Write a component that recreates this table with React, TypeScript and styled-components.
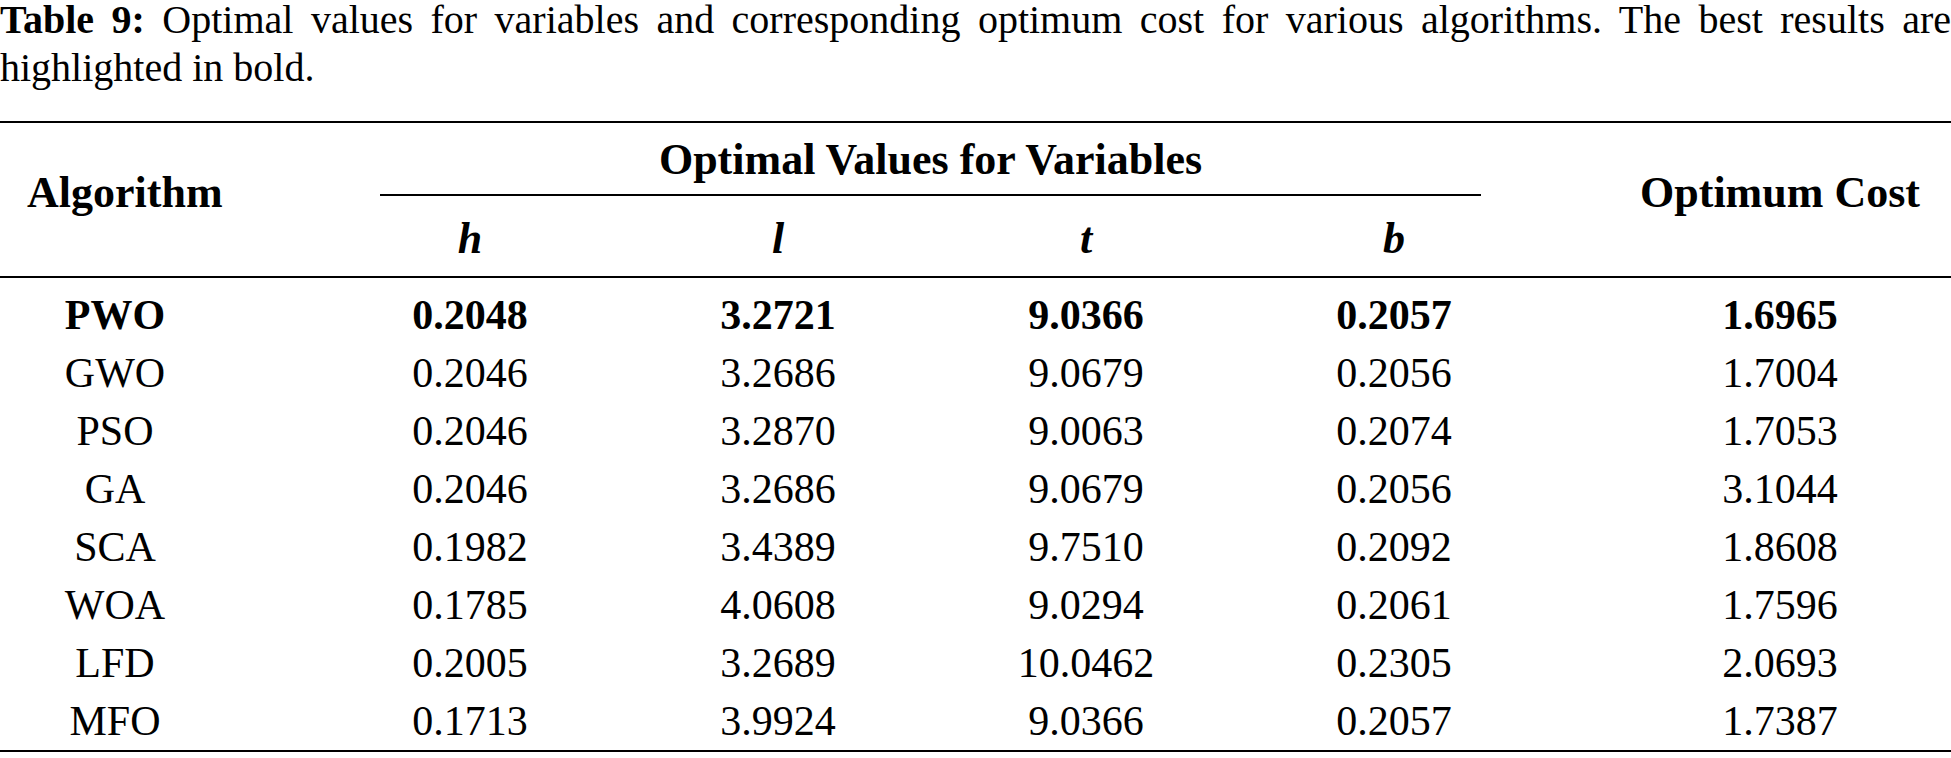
import styled, { createGlobalStyle } from 'styled-components'

const VARS = ['h', 'l', 't', 'b']

const ROWS = [
  { name: 'PWO', values: ['0.2048', '3.2721', '9.0366', '0.2057'], cost: '1.6965', best: true },
  { name: 'GWO', values: ['0.2046', '3.2686', '9.0679', '0.2056'], cost: '1.7004' },
  { name: 'PSO', values: ['0.2046', '3.2870', '9.0063', '0.2074'], cost: '1.7053' },
  { name: 'GA', values: ['0.2046', '3.2686', '9.0679', '0.2056'], cost: '3.1044' },
  { name: 'SCA', values: ['0.1982', '3.4389', '9.7510', '0.2092'], cost: '1.8608' },
  { name: 'WOA', values: ['0.1785', '4.0608', '9.0294', '0.2061'], cost: '1.7596' },
  { name: 'LFD', values: ['0.2005', '3.2689', '10.0462', '0.2305'], cost: '2.0693' },
  { name: 'MFO', values: ['0.1713', '3.9924', '9.0366', '0.2057'], cost: '1.7387' },
]

export default function App() {
  return (
    <>
      <GlobalStyle />
      <Page>
        <Caption>
          <b>Table 9:</b> Optimal values for variables and corresponding optimum cost for various
          algorithms. The best results are highlighted in bold.
        </Caption>
        <Table>
          <Head>
            <AlgoHead>Algorithm</AlgoHead>
            <GroupHead>Optimal Values for Variables</GroupHead>
            {VARS.map((v, idx) => (
              <SubHead key={v} col={idx + 2}>{v}</SubHead>
            ))}
            <CostHead>Optimum Cost</CostHead>
          </Head>
          <Body>
            {ROWS.map(row => (
              <Row key={row.name} best={row.best}>
                <NameCell>{row.name}</NameCell>
                {row.values.map((val, idx) => (
                  <Cell key={idx}>{val}</Cell>
                ))}
                <CostCell>{row.cost}</CostCell>
              </Row>
            ))}
          </Body>
        </Table>
      </Page>
    </>
  )
}

const GlobalStyle = createGlobalStyle`
  html, body {
    margin: 0;
    padding: 0;
    background: #fff;
  }
  body {
    font-family: "Liberation Serif", "Times New Roman", serif;
    color: #000;
    overflow: hidden;
  }
`

// name col, four variable cols, cost col
const COLUMNS = '316px repeat(4, 308px) 1fr'

const Page = styled.div`
  width: 1951px;
`

const Caption = styled.p`
  margin: -4px 0 0;
  font-size: 40px;
  line-height: 48px;
  text-align: justify;

  b {
    font-weight: 700;
  }
`

const Table = styled.div`
  margin-top: 29px;
  border-top: 2px solid #000;
  border-bottom: 2px solid #000;
`

const Head = styled.div`
  display: grid;
  grid-template-columns: ${COLUMNS};
  grid-template-rows: 73px 80px;
  border-bottom: 2px solid #000;
  font-size: 44px;
  font-weight: 700;
`

const AlgoHead = styled.div`
  grid-column: 1;
  grid-row: 1 / span 2;
  padding: 34px 0 0 27px;
  line-height: 72px;
`

const GroupHead = styled.div`
  grid-column: 2 / span 4;
  grid-row: 1;
  margin: 0 67px 0 64px;
  border-bottom: 2px solid #000;
  text-align: center;
  line-height: 73px;
`

const SubHead = styled.div<{ col: number }>`
  grid-column: ${p => p.col};
  grid-row: 2;
  padding-top: 6px;
  text-align: center;
  font-style: italic;
  line-height: 74px;
`

const CostHead = styled.div`
  grid-column: 6;
  grid-row: 1 / span 2;
  padding: 34px 0 0 61px;
  text-align: center;
  line-height: 72px;
`

const Body = styled.div`
  padding-top: 8px;
`

const Row = styled.div<{ best?: boolean }>`
  display: grid;
  grid-template-columns: ${COLUMNS};
  height: 58px;
  font-size: 42px;
  line-height: 58px;
  font-weight: ${p => (p.best ? 700 : 400)};
`

const Cell = styled.div`
  text-align: center;
`

const NameCell = styled(Cell)`
  padding-right: 86px;
`

const CostCell = styled(Cell)`
  padding-left: 61px;
`
